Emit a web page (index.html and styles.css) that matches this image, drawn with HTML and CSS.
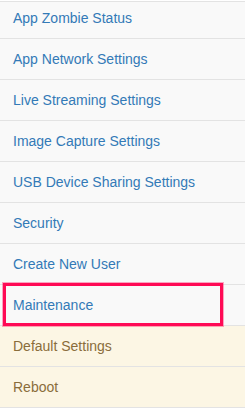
FILE: index.html
```html
<!DOCTYPE html>
<html>
<head>
<meta charset="utf-8">
<link rel="stylesheet" href="styles.css">
</head>
<body>
<div class="menu">
  <ul class="list">
    <li class="item first"><a>App Zombie Status</a></li>
    <li class="item"><a>App Network Settings</a></li>
    <li class="item"><a>Live Streaming Settings</a></li>
    <li class="item"><a>Image Capture Settings</a></li>
    <li class="item"><a>USB Device Sharing Settings</a></li>
    <li class="item"><a>Security</a></li>
    <li class="item"><a>Create New User</a></li>
    <li class="item"><a>Maintenance</a></li>
    <li class="item warn"><a>Default Settings</a></li>
    <li class="item warn"><a>Reboot</a></li>
  </ul>
  <div class="highlight"></div>
</div>
</body>
</html>
```
FILE: styles.css
```css
html, body {
  margin: 0;
  padding: 0;
  background: #ffffff;
}
body {
  font-family: "Liberation Sans", Arial, sans-serif;
  font-size: 14px;
  line-height: 20px;
}
.menu {
  position: relative;
  padding-top: 1px;
}
.list {
  list-style: none;
  margin: 0;
  padding: 0;
}
.item {
  background: #f9f9f9;
  border-top: 1px solid #e3e3e3;
  padding: 10px 13px;
  color: #337ab7;
}
.item.first {
  padding-top: 6px;
}
.item:last-child {
  border-bottom: 1px solid #e3e3e3;
}
.item.warn {
  background: #fcf6e4;
  color: #8a6d3b;
}
.highlight {
  position: absolute;
  left: 3px;
  top: 283px;
  width: 214px;
  height: 37px;
  border: 3px solid #ff0a55;
  box-shadow: 0 0 0 1px rgba(255, 10, 85, 0.35);
}
```
